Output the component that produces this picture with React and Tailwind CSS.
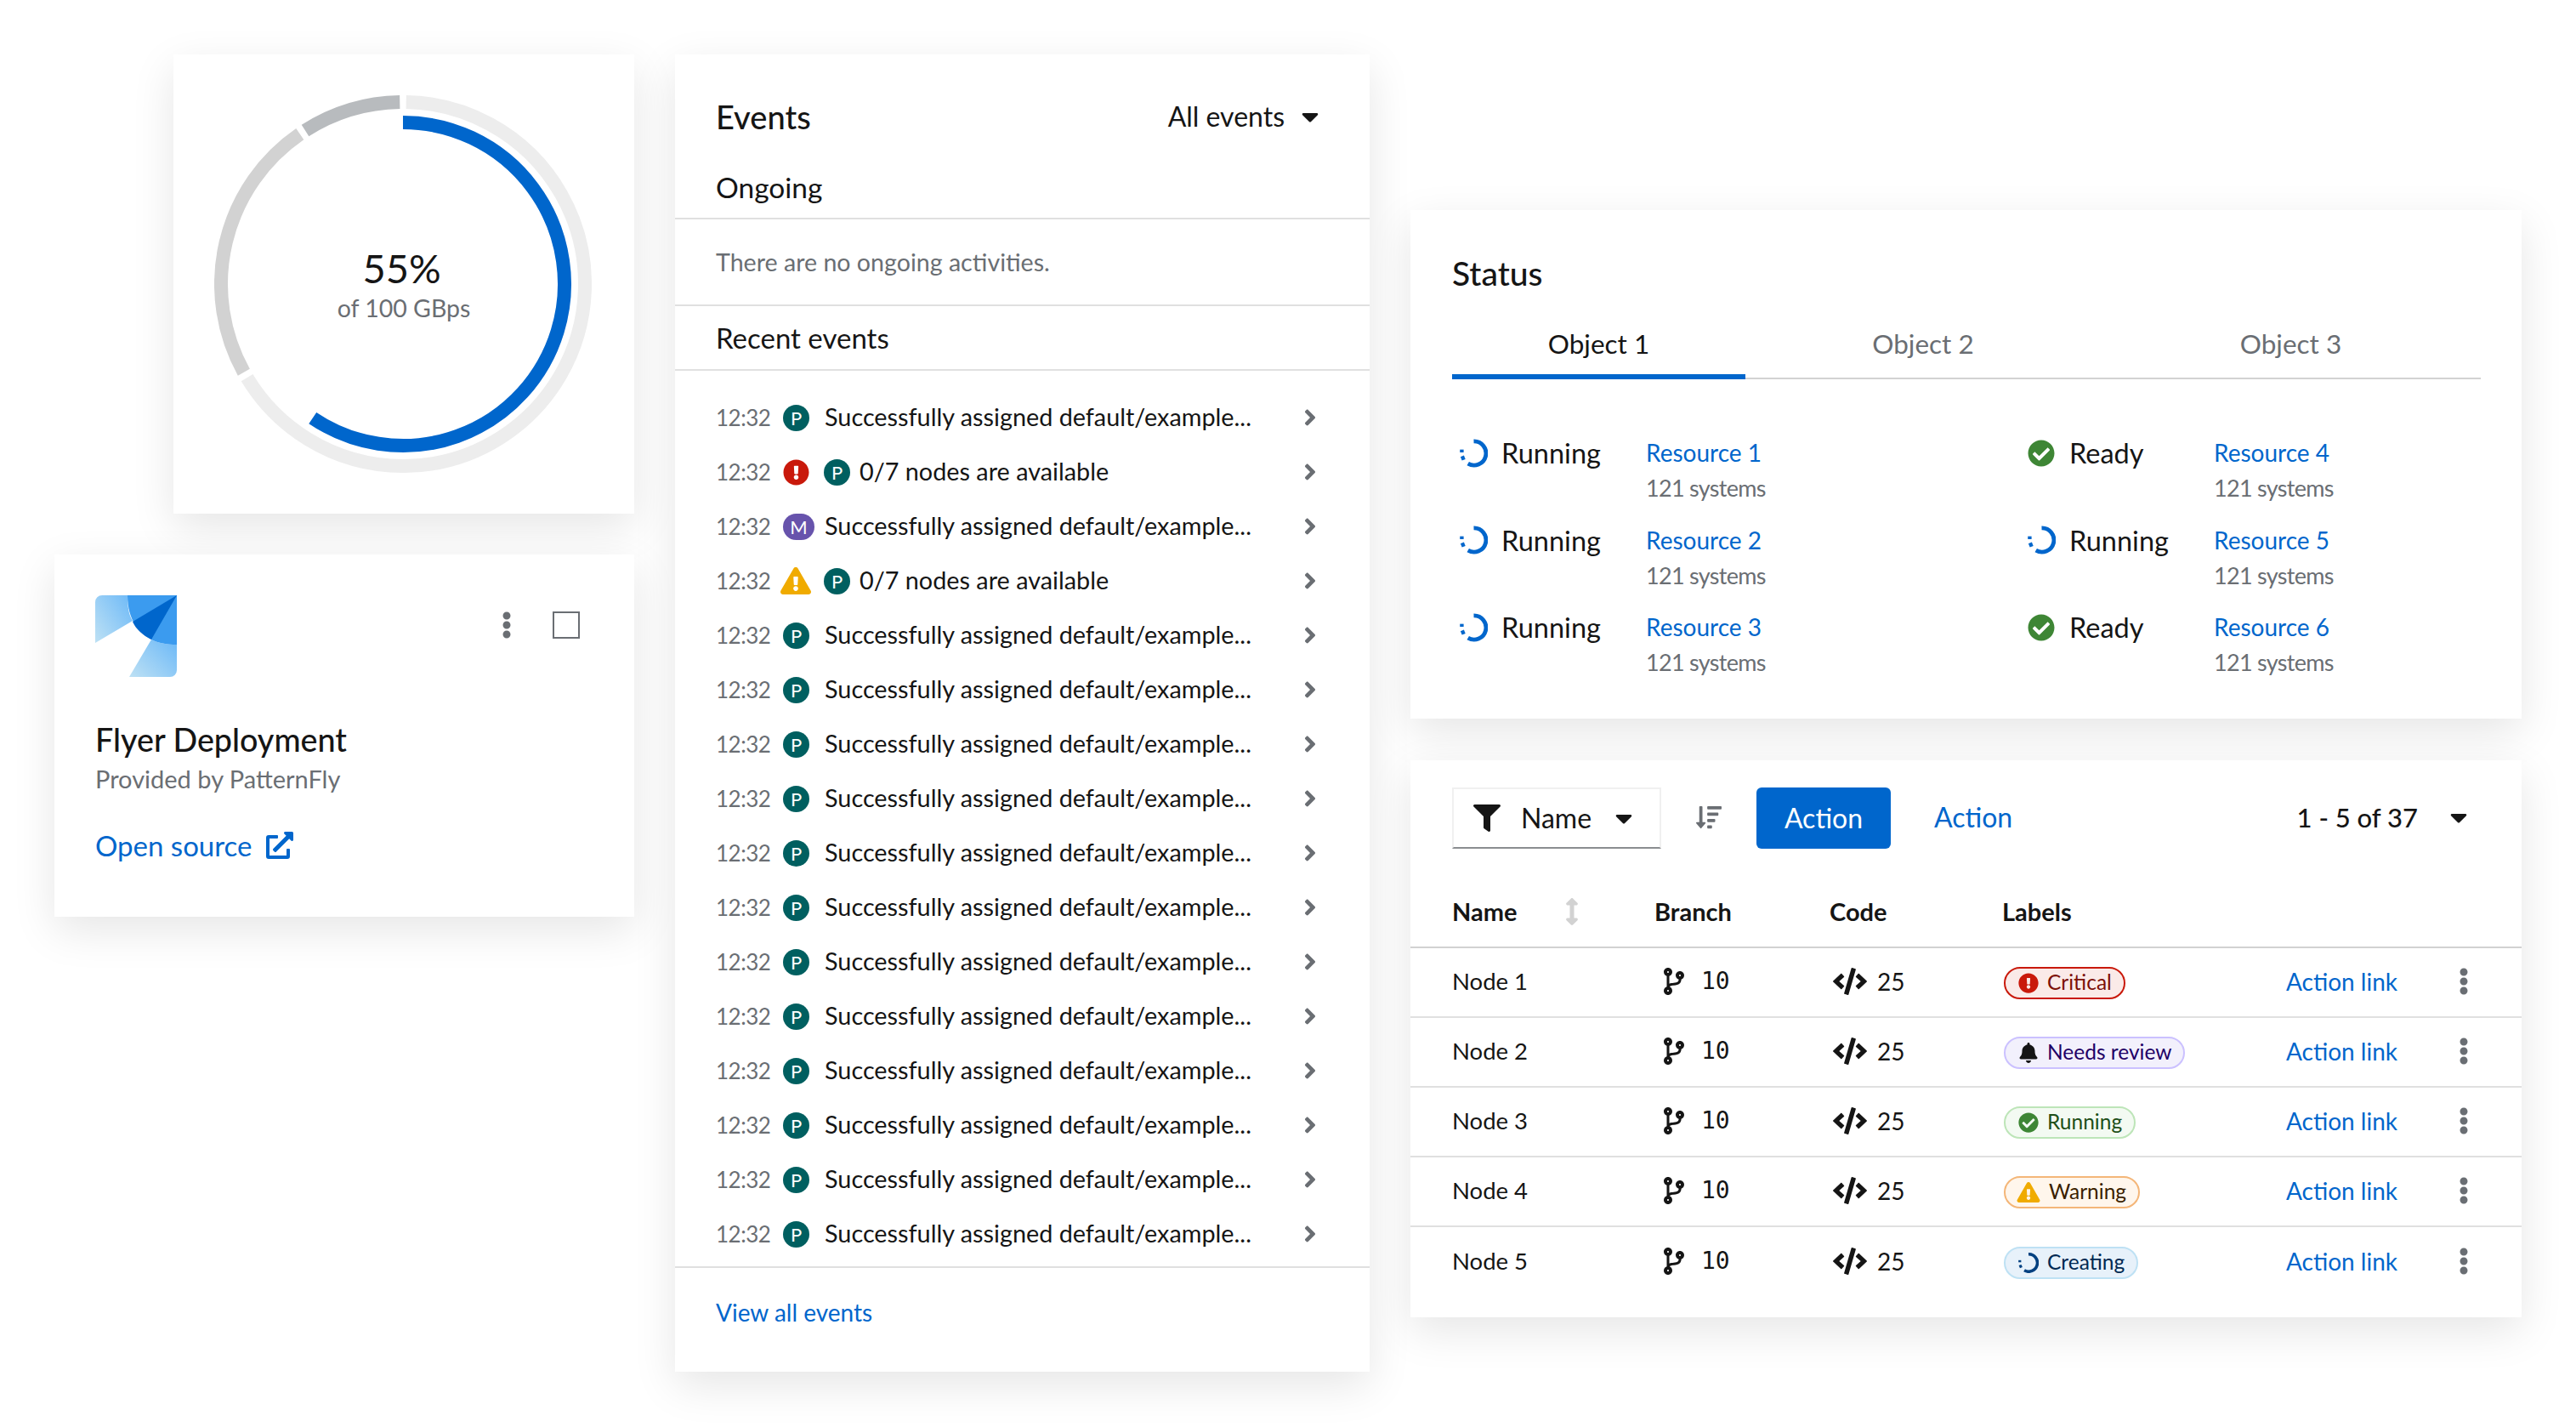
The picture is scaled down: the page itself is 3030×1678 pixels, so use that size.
import React from 'react'
import {
  FaFilter, FaCodeBranch, FaCode, FaBell, FaCheckCircle, FaExclamationCircle, FaExclamationTriangle,
  FaAngleRight, FaEllipsisV, FaCaretDown, FaExternalLinkAlt, FaArrowsAltV, FaSortAmountDown,
} from 'react-icons/fa'

function arc(r, a0, a1) {
  const pt = (a) => {
    const t = ((a - 90) * Math.PI) / 180
    return `${(222 + r * Math.cos(t)).toFixed(2)} ${(222 + r * Math.sin(t)).toFixed(2)}`
  }
  return `M ${pt(a0)} A ${r} ${r} 0 ${a1 - a0 > 180 ? 1 : 0} 1 ${pt(a1)}`
}

function Spinner({ className }) {
  return (
    <svg viewBox="0 0 34 34" fill="none" className={className}>
      <path d="M17 2.5 A14.5 14.5 0 1 1 10 29.5" stroke="currentColor" strokeWidth="5" />
      <path d="M2.5 12.5 L2.5 16" stroke="currentColor" strokeWidth="4.5" />
      <path d="M3 20.5 L4.8 25" stroke="currentColor" strokeWidth="4.5" />
    </svg>
  )
}

function Logo() {
  return (
    <svg viewBox="0 0 96 96" className="w-24 h-24">
      <defs>
        <linearGradient id="lg1" x1="0" y1="1" x2="1" y2="0.2">
          <stop offset="0" stopColor="#bee1f4" />
          <stop offset="1" stopColor="#73bcf7" />
        </linearGradient>
      </defs>
      <path d="M8 0 H38 C38 12 39 22 44 30 L0 56 V8 A8 8 0 0 1 8 0 Z" fill="url(#lg1)" />
      <path d="M66 52 C74 56 84 58 96 58 V88 A8 8 0 0 1 88 96 H40 Z" fill="url(#lg1)" />
      <path d="M38 0 H96 V58 C84 58 74 56 66 52 C52 44 38 30 38 0 Z" fill="#3b9bef" />
      <path d="M96 0 L44 31 C48 40 56 47 66 52 Z" fill="#0066cc" />
    </svg>
  )
}

function GaugeCard() {
  return (
    <div className="w-[542px] h-[540px] bg-white shadow-[0_16px_48px_rgba(3,3,3,0.1)] flex items-center justify-center pr-[2px]">
      <div className="relative w-[444px] h-[444px]">
        <svg viewBox="0 0 444 444" fill="none" className="w-full h-full">
          <path d={arc(214, 1, 239)} stroke="#ededed" strokeWidth="16" />
          <path d={arc(214, 241, 325.5)} stroke="#d2d2d2" strokeWidth="16" />
          <path d={arc(214, 327.5, 359)} stroke="#b8bbbe" strokeWidth="16" />
          <path d={arc(190, 0, 214)} stroke="#0066cc" strokeWidth="16" />
        </svg>
        <div className="absolute inset-0 flex flex-col items-center justify-center">
          <span className="text-[47px] leading-[56px] text-[#151515] -mt-[1px] -ml-[3px]">55%</span>
          <span className="text-[28.5px] leading-[38px] text-[#6a6e73] ml-[2px]">of 100 GBps</span>
        </div>
      </div>
    </div>
  )
}

function FlyerCard() {
  return (
    <div className="w-[682px] h-[426px] mt-[48px] bg-white shadow-[0_16px_48px_rgba(3,3,3,0.1)] px-12 pt-12">
      <div className="flex items-start justify-between">
        <Logo />
        <div className="flex items-center gap-[39px] pt-[19px] pr-[16px]">
          <FaEllipsisV className="w-[30px] h-8 text-[#6a6e73]" />
          <div className="w-8 h-8 border-2 border-[#6a6e73]" />
        </div>
      </div>
      <div className="mt-[51px] text-[37.7px] leading-[46px] font-medium text-[#151515]">Flyer Deployment</div>
      <div className="text-[29px] leading-[38px] text-[#6a6e73] mt-[4px]">Provided by PatternFly</div>
      <div className="flex items-center gap-4 mt-[37px] text-[33px] leading-[44px] text-[#0066cc]">
        Open source
        <FaExternalLinkAlt className="w-8 h-8" />
      </div>
    </div>
  )
}

const events = Array.from({ length: 16 }, (_, i) => {
  if (i === 1) return { kind: 'error' }
  if (i === 3) return { kind: 'warning' }
  if (i === 2) return { kind: 'm' }
  return { kind: 'ok' }
})

function PBadge() {
  return <span className="w-[31px] h-[31px] rounded-full bg-[#005f60] text-white text-[22px] flex items-center justify-center shrink-0">P</span>
}

function EventRow({ kind }) {
  const short = kind === 'error' || kind === 'warning'
  return (
    <div className="h-[64px] flex items-center text-[28.8px] text-[#151515]">
      <span className="w-[79px] shrink-0 text-[26px] tracking-[-0.5px] text-[#6a6e73]">12:32</span>
      {kind === 'ok' && <PBadge />}
      {kind === 'm' && <span className="w-[37px] h-[31px] rounded-full bg-[#6753ac] text-white text-[22px] flex items-center justify-center shrink-0">M</span>}
      {kind === 'error' && <FaExclamationCircle className="w-[31px] h-[31px] text-[#c9190b] shrink-0" />}
      {kind === 'warning' && <FaExclamationTriangle className="w-[36px] h-[32px] -ml-[3px] text-[#f0ab00] shrink-0" />}
      {short ? (
        <>
          <span className={kind === 'warning' ? 'ml-[15px]' : 'ml-[17px]'}><PBadge /></span>
          <span className="ml-[11px]">0/7 nodes are available</span>
        </>
      ) : (
        <span className={kind === 'm' ? 'ml-[12px]' : 'ml-[18px]'}>Successfully assigned default/example...</span>
      )}
      <FaAngleRight className="ml-auto mr-[8px] w-[24px] h-[30px] text-[#6a6e73]" />
    </div>
  )
}

function EventsCard() {
  return (
    <div className="w-[817px] h-[1549px] ml-[48px] bg-white shadow-[0_16px_48px_rgba(3,3,3,0.1)] pt-[49px]">
      <div className="h-12 px-12 flex items-center justify-between text-[#151515]">
        <span className="text-[38px] font-medium">Events</span>
        <span className="flex items-center gap-[14px] text-[32px] pr-[6px]">
          All events
          <FaCaretDown className="w-8 h-8" />
        </span>
      </div>
      <div className="pt-[37px] pb-[14px] px-12 border-b-2 border-[#e0e0e0] text-[33.5px] leading-[44px] text-[#151515]">Ongoing</div>
      <div className="h-[102px] px-12 border-b-2 border-[#e0e0e0] flex items-center text-[28.6px] text-[#6a6e73]">There are no ongoing activities.</div>
      <div className="h-[76px] pt-[2px] px-12 border-b-2 border-[#e0e0e0] flex items-center text-[33px] text-[#151515]">Recent events</div>
      <div className="pt-[23px] pb-[6px] px-12 border-b-2 border-[#e0e0e0]">
        <div className="pr-[2px]">
          {events.map((e, i) => <EventRow key={i} kind={e.kind} />)}
        </div>
      </div>
      <div className="px-12 pt-[30px] text-[28px] leading-[44px] text-[#0066cc]">View all events</div>
    </div>
  )
}

const statusItems = [
  { state: 'Running', name: 'Resource 1' },
  { state: 'Ready', name: 'Resource 4' },
  { state: 'Running', name: 'Resource 2' },
  { state: 'Running', name: 'Resource 5' },
  { state: 'Running', name: 'Resource 3' },
  { state: 'Ready', name: 'Resource 6' },
]

function StatusCard() {
  return (
    <div className="h-[598px] bg-white shadow-[0_16px_48px_rgba(3,3,3,0.1)] pl-[49px] pr-12 pt-[52px]">
      <div className="text-[39px] leading-[44px] font-medium text-[#151515]">Status</div>
      <div className="flex border-b-2 border-[#d2d2d2] h-[103px] text-[31.5px] leading-[44px]">
        <div className="w-[345px] h-[103px] flex items-end justify-center pb-[14px] border-b-[6px] border-[#0066cc] text-[#151515]">Object 1</div>
        <div className="w-[418px] h-[103px] flex items-end justify-center pb-[20px] text-[#6a6e73]">Object 2</div>
        <div className="w-[447px] h-[103px] flex items-end justify-center pb-[20px] text-[#6a6e73]">Object 3</div>
      </div>
      <div className="grid grid-cols-[668px_1fr] mt-[66px]">
        {statusItems.map((s) => (
          <div key={s.name} className="h-[102.5px] flex items-start pl-[9px]">
            <div className="w-[33px] h-[41px] flex items-center shrink-0">
              {s.state === 'Ready'
                ? <FaCheckCircle className="w-8 h-8 text-[#3e8635]" />
                : <Spinner className="w-[34px] h-[34px] text-[#0066cc]" />}
            </div>
            <span className="w-[170px] ml-[16px] text-[32.5px] leading-[41px] text-[#151515] shrink-0">{s.state}</span>
            <div className="text-[28px] leading-[41px]">
              <div className="text-[#0066cc]">{s.name}</div>
              <div className="text-[27px] tracking-[-0.7px] text-[#6a6e73]">121 systems</div>
            </div>
          </div>
        ))}
      </div>
    </div>
  )
}

const labelStyles = {
  Critical: 'bg-[#faeae8] border-[#c9190b] text-[#7d1007]',
  'Needs review': 'bg-[#f2f0fc] border-[#cbc1ff] text-[#1f0066]',
  Running: 'bg-[#f3faf2] border-[#bde5b8] text-[#1e4f18]',
  Warning: 'bg-[#fff6ec] border-[#f4b678] text-[#3b1f00]',
  Creating: 'bg-[#e7f1fa] border-[#bee1f4] text-[#002952]',
}

function LabelIcon({ name }) {
  if (name === 'Critical') return <FaExclamationCircle className="w-6 h-6 text-[#c9190b]" />
  if (name === 'Needs review') return <FaBell className="w-6 h-6 text-[#151515]" />
  if (name === 'Running') return <FaCheckCircle className="w-6 h-6 text-[#3e8635]" />
  if (name === 'Warning') return <FaExclamationTriangle className="w-[28px] h-6 -ml-[2px] text-[#f0ab00]" />
  return <Spinner className="w-6 h-6 text-[#004080]" />
}

const rows = [
  { node: 'Node 1', label: 'Critical' },
  { node: 'Node 2', label: 'Needs review' },
  { node: 'Node 3', label: 'Running' },
  { node: 'Node 4', label: 'Warning' },
  { node: 'Node 5', label: 'Creating' },
]

const cols = 'grid grid-cols-[238px_206px_201px_336px_209px_1fr] items-center pl-[49px]'

function TableCard() {
  return (
    <div className="h-[655px] mt-[49px] bg-white shadow-[0_16px_48px_rgba(3,3,3,0.1)] pt-8">
      <div className="h-[72px] flex items-center pl-[49px] pr-[58px] -mt-[1px] mb-[1px] text-[32px]">
        <div className="w-[246px] h-[72px] mt-[1px] flex items-center pl-[23px] border-2 border-[#f0f0f0] border-b-[#8a8d90] text-[#151515]">
          <FaFilter className="w-8 h-8" />
          <span className="ml-[24px]">Name</span>
          <FaCaretDown className="w-8 h-8 ml-[22px]" />
        </div>
        <FaSortAmountDown className="w-[34px] h-[30px] ml-[39px] text-[#6a6e73]" />
        <div className="w-[158px] h-[72px] mt-[1px] ml-[39px] rounded-md bg-[#0066cc] text-white flex items-center justify-center">Action</div>
        <span className="ml-[51px] text-[#0066cc]">Action</span>
        <span className="ml-auto text-[31px] font-medium text-[#151515]">1 - 5 of 37</span>
        <FaCaretDown className="w-8 h-8 ml-[32px] text-[#151515]" />
      </div>
      <div className={`${cols} h-[117px] pb-[23px] items-end border-b-2 border-[#d2d2d2] text-[29px] leading-[36px] font-bold text-[#151515]`}>
        <span className="flex items-center">
          Name
          <FaArrowsAltV className="w-[22px] h-8 ml-[54px] text-[#d2d2d2]" />
        </span>
        <span>Branch</span>
        <span>Code</span>
        <span className="pl-[2px]">Labels</span>
      </div>
      {rows.map((r, i) => (
        <div key={r.node} className={`${cols} h-[82px] text-[28px] text-[#151515] ${i < 4 ? 'border-b-2 border-[#e0e0e0]' : ''}`}>
          <span className="text-[27.5px] -mt-[2px]">{r.node}</span>
          <span className="flex items-center pl-[10px] -mt-[2px]">
            <FaCodeBranch className="w-[26px] h-8" />
            <span className="ml-[19px] text-[28px] font-['DejaVu_Sans_Mono',monospace]">10</span>
          </span>
          <span className="flex items-center pl-[3px] -mt-[2px]">
            <FaCode className="w-[42px] h-8" />
            <span className="ml-[11px]">25</span>
          </span>
          <span className="pl-[4px] pt-[1px] flex">
            <span className={`inline-flex items-center gap-[10px] h-[38px] pl-[15px] pr-[14px] rounded-full border-2 text-[24.5px] ${labelStyles[r.label]}`}>
              <LabelIcon name={r.label} />
              {r.label}
            </span>
          </span>
          <span className="text-[#0066cc] -mt-[2px]">Action link</span>
          <FaEllipsisV className="w-[30px] h-8 text-[#6a6e73] -ml-[15px] -mt-[2px]" />
        </div>
      ))}
    </div>
  )
}

export default function App() {
  return (
    <div className="w-[3030px] h-[1678px] bg-white flex pl-16 pt-16 overflow-hidden font-['Lato',sans-serif]">
      <div className="w-[682px] flex flex-col items-end">
        <GaugeCard />
        <FlyerCard />
      </div>
      <EventsCard />
      <div className="w-[1307px] ml-[48px] pt-[183px]">
        <StatusCard />
        <TableCard />
      </div>
    </div>
  )
}
